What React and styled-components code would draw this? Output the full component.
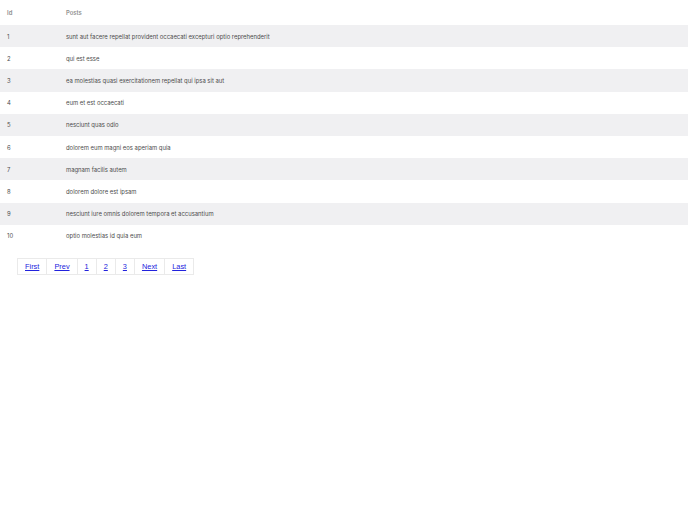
import React from "react";
import styled, { createGlobalStyle } from "styled-components";

const Global = createGlobalStyle`
  html, body { margin: 0; padding: 0; background: #fff; }
  body { font-family: Inter, "Liberation Sans", sans-serif; }
`;

const posts = [
  "sunt aut facere repellat provident occaecati excepturi optio reprehenderit",
  "qui est esse",
  "ea molestias quasi exercitationem repellat qui ipsa sit aut",
  "eum et est occaecati",
  "nesciunt quas odio",
  "dolorem eum magni eos aperiam quia",
  "magnam facilis autem",
  "dolorem dolore est ipsam",
  "nesciunt iure omnis dolorem tempora et accusantium",
  "optio molestias id quia eum",
];

const Table = styled.table`
  width: 100%;
  border-collapse: collapse;
  table-layout: fixed;
  font-size: 5.9px;
`;

const HeadCell = styled.th`
  box-sizing: border-box;
  text-align: left;
  font-weight: 600;
  color: #8f8f8f;
  height: 25px;
  padding: 0 0 0 ${(p) => p.$pl}px;
  width: ${(p) => (p.$w ? p.$w + "px" : "auto")};
`;

const Row = styled.tr`
  background: ${(p) => (p.$odd ? "#f0f0f2" : "#fff")};
  height: 22.2px;
`;

const Cell = styled.td`
  box-sizing: border-box;
  color: #4c4c4c;
  padding: 0 0 0 ${(p) => p.$pl}px;
`;

const Pager = styled.ul`
  list-style: none;
  display: flex;
  margin: 11px 0 0 18px;
  padding: 0;
`;

const PageItem = styled.li`
  border: 1px solid #eaeaea;
  margin-left: -1px;
  height: 15px;
  display: flex;
  align-items: center;
  padding: 0 7px;
`;

const PageLink = styled.a`
  color: #2222dd;
  text-decoration: underline;
  font-size: 7.4px;
  font-family: "Liberation Sans", Arial, sans-serif;
`;

const pages = ["First", "Prev", "1", "2", "3", "Next", "Last"];

export default function App() {
  return (
    <>
      <Global />
      <Table>
        <thead>
          <tr>
            <HeadCell $pl={7} $w={66}>Id</HeadCell>
            <HeadCell $pl={0}>Posts</HeadCell>
          </tr>
        </thead>
        <tbody>
          {posts.map((t, i) => (
            <Row key={i} $odd={i % 2 === 0}>
              <Cell $pl={7}>{i + 1}</Cell>
              <Cell $pl={0}>{t}</Cell>
            </Row>
          ))}
        </tbody>
      </Table>
      <Pager>
        {pages.map((l) => (
          <PageItem key={l}>
            <PageLink href="#">{l}</PageLink>
          </PageItem>
        ))}
      </Pager>
    </>
  );
}
